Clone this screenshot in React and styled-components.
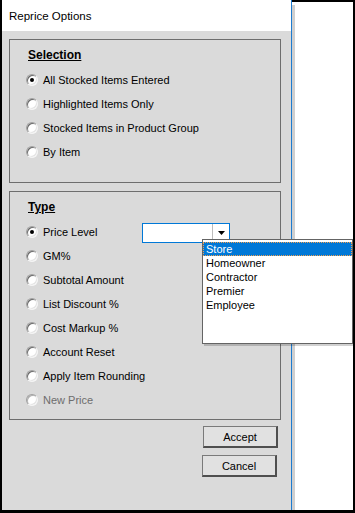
import React from 'react';
import styled, { createGlobalStyle } from 'styled-components';

const GlobalStyle = createGlobalStyle`
  html, body {
    margin: 0;
    padding: 0;
    background: #000;
  }
  body {
    font-family: "Liberation Sans", Arial, sans-serif;
    font-size: 11px;
    color: #000;
  }
`;

const Screen = styled.div`
  position: relative;
  width: 355px;
  height: 513px;
  box-sizing: border-box;
  padding: 0 2px 3px 2px;
  background: #000;
  display: flex;
`;

const Dialog = styled.div`
  width: 290px;
  box-sizing: border-box;
  border-right: 1px solid #1d7bd0;
  display: flex;
  flex-direction: column;
  background: #dadada;
`;

const TitleBar = styled.div`
  height: 31px;
  flex: none;
  background: #fff;
  display: flex;
  align-items: center;
  padding-left: 7px;
  font-size: 11.5px;
`;

const Body = styled.div`
  flex: 1;
  padding: 8px 0 0 7px;
  display: flex;
  flex-direction: column;
`;

const GroupBox = styled.div`
  width: 272px;
  height: ${({ $h }) => $h}px;
  box-sizing: border-box;
  border: 1px solid #6e6e6e;
  padding: 7px 0 0 16px;
  margin-bottom: ${({ $mb }) => $mb || 0}px;
`;

const Heading = styled.div`
  height: 16px;
  line-height: 16px;
  font-size: 12px;
  font-weight: bold;
  text-decoration: underline;
  margin: 0 0 5px 2px;
`;

const Row = styled.div`
  height: 24px;
  display: flex;
  align-items: center;
`;

const RadioCircle = styled.span`
  position: relative;
  flex: none;
  width: 12px;
  height: 12px;
  box-sizing: border-box;
  border-radius: 50%;
  background: #fff;
  border: 1px solid;
  border-color: #a0a0a0 #f4f4f4 #f4f4f4 #a0a0a0;
  box-shadow: inset 1px 1px 0 ${({ $disabled }) => ($disabled ? '#b0b0b0' : '#6a6a6a')}, inset -1px -1px 0 #e3e3e3;

  &::after {
    content: '';
    display: ${({ $checked }) => ($checked ? 'block' : 'none')};
    position: absolute;
    left: 3px;
    top: 3px;
    width: 4px;
    height: 4px;
    border-radius: 50%;
    background: #000;
  }
`;

const Label = styled.span`
  margin-left: 5px;
  color: ${({ $disabled }) => ($disabled ? '#6d6d6d' : '#000')};
  white-space: nowrap;
`;

const RadioStart = styled.div`
  display: flex;
  align-items: center;
  width: 116px;
`;

const Combo = styled.div`
  width: 88px;
  height: 20px;
  box-sizing: border-box;
  margin-top: 2px;
  border: 1px solid #0078d7;
  background: #fff;
  display: flex;
  justify-content: flex-end;
`;

const ComboButton = styled.div`
  width: 16px;
  border-left: 1px solid #bcbcbc;
  display: flex;
  align-items: center;
  justify-content: center;
`;

const DropList = styled.div`
  position: absolute;
  left: 202px;
  top: 239px;
  width: 151px;
  height: 105px;
  box-sizing: border-box;
  border: 1px solid #646464;
  background: #fff;
  padding-top: 2px;
  box-shadow: 2px 2px 0 rgba(0, 0, 0, 0.18);
`;

const DropItem = styled.div`
  height: 14px;
  line-height: 14px;
  padding-left: 3px;
  box-sizing: border-box;
  background: ${({ $selected }) => ($selected ? '#0078d7' : 'transparent')};
  color: ${({ $selected }) => ($selected ? '#fff' : '#000')};
  outline: ${({ $selected }) => ($selected ? '1px dotted #f0a050' : 'none')};
  outline-offset: -1px;
`;

const Buttons = styled.div`
  display: flex;
  flex-direction: column;
  align-items: flex-end;
  gap: 7px;
  padding-right: 13px;
`;

const Button = styled.div`
  width: 75px;
  height: 22px;
  box-sizing: border-box;
  margin-right: ${({ $shift }) => $shift || 0}px;
  background: #e1e1e1;
  border: 1px solid #7a7a7a;
  border-right: 2px solid #4f4f4f;
  border-bottom: 2px solid #4f4f4f;
  display: flex;
  align-items: center;
  justify-content: center;
  font-size: 11px;
`;

const Shadow = styled.div`
  width: 3px;
  margin-top: 2px;
  background: linear-gradient(#fff 3px, #cfcfcf 3px);
`;

const RightPane = styled.div`
  flex: 1;
  margin-top: 2px;
  background: #fff;
`;

const selection = [
  { label: 'All Stocked Items Entered', checked: true },
  { label: 'Highlighted Items Only' },
  { label: 'Stocked Items in Product Group' },
  { label: 'By Item' },
];

const types = [
  { label: 'GM%' },
  { label: 'Subtotal Amount' },
  { label: 'List Discount %' },
  { label: 'Cost Markup %' },
  { label: 'Account Reset' },
  { label: 'Apply Item Rounding' },
  { label: 'New Price', disabled: true },
];

const levels = ['Store', 'Homeowner', 'Contractor', 'Premier', 'Employee'];

const Radio = ({ label, checked, disabled }) => (
  <Row>
    <RadioCircle $checked={checked} $disabled={disabled} />
    <Label $disabled={disabled}>{label}</Label>
  </Row>
);

const App = () => {
  return (
    <>
      <GlobalStyle />
      <Screen>
        <Dialog>
          <TitleBar>Reprice Options</TitleBar>
          <Body>
            <GroupBox $h={144} $mb={8}>
              <Heading>Selection</Heading>
              {selection.map((item) => (
                <Radio key={item.label} {...item} />
              ))}
            </GroupBox>
            <GroupBox $h={229} $mb={6}>
              <Heading>Type</Heading>
              <Row>
                <RadioStart>
                  <RadioCircle $checked />
                  <Label>Price Level</Label>
                </RadioStart>
                <Combo>
                  <ComboButton>
                    <svg width="7" height="4" viewBox="0 0 7 4">
                      <path d="M0 0h7L3.5 4z" fill="#000" />
                    </svg>
                  </ComboButton>
                </Combo>
              </Row>
              {types.map((item) => (
                <Radio key={item.label} {...item} />
              ))}
            </GroupBox>
            <Buttons>
              <Button>Accept</Button>
              <Button $shift={1}>Cancel</Button>
            </Buttons>
          </Body>
        </Dialog>
        <Shadow />
        <RightPane />
        <DropList>
          {levels.map((lvl, i) => (
            <DropItem key={lvl} $selected={i === 0}>{lvl}</DropItem>
          ))}
        </DropList>
      </Screen>
    </>
  );
};

export default App;
